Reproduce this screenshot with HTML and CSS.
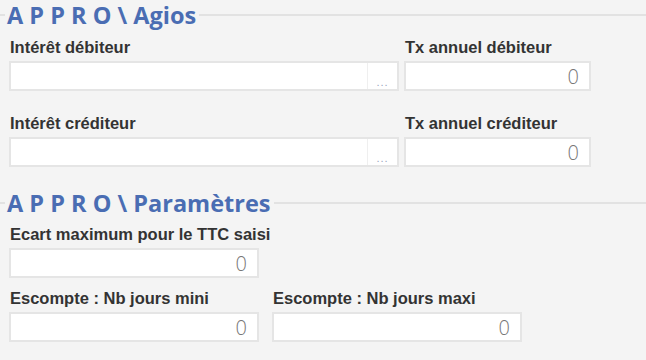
FILE: index.html
```html
<!DOCTYPE html>
<html lang="fr">
<head>
    <meta charset="UTF-8">
    <meta name="viewport" content="width=device-width, initial-scale=1.0">
    <title>APPRO - Paramètres</title>
    <link rel="stylesheet" href="styles.css">
</head>
<body>

<!-- Agios -->
<div class="group">
    <div class="group-title">A P P R O \ Agios</div>

    <div class="row">
        <div class="field field-wide">
            <label>Intérêt débiteur</label>
            <div class="box">
                <span class="box-text"></span>
                <span class="picker">...</span>
            </div>
        </div>
        <div class="field field-rate">
            <label>Tx annuel débiteur</label>
            <div class="box num">0</div>
        </div>
    </div>

    <div class="row">
        <div class="field field-wide">
            <label>Intérêt créditeur</label>
            <div class="box">
                <span class="box-text"></span>
                <span class="picker">...</span>
            </div>
        </div>
        <div class="field field-rate">
            <label>Tx annuel créditeur</label>
            <div class="box num">0</div>
        </div>
    </div>
</div>

<!-- Paramètres -->
<div class="group group-params">
    <div class="group-title">A P P R O \ Paramètres</div>

    <div class="row">
        <div class="field field-half">
            <label>Ecart maximum pour le TTC saisi</label>
            <div class="box num">0</div>
        </div>
    </div>

    <div class="row row-params">
        <div class="field field-half">
            <label>Escompte : Nb jours mini</label>
            <div class="box num">0</div>
        </div>
        <div class="field field-half">
            <label>Escompte : Nb jours maxi</label>
            <div class="box num">0</div>
        </div>
    </div>
</div>

</body>
</html>
```

FILE: styles.css
```css
body { margin: 0; background: #f4f4f4; font-family: "Liberation Sans", Arial, sans-serif; color: #333; }

.group { padding-top: 1px; }
.group-params { margin-top: 21px; }

.group-title { display: flex; align-items: center; height: 28px; font-family: "Open Sans", sans-serif; font-weight: 700; font-size: 23.5px; color: #4a6db3; line-height: 28px; }
.group-title::before { content: ""; width: 5px; border-top: 2px solid #e2e2e2; margin-right: 2px; }
.group-title::after { content: ""; flex: 1; border-top: 2px solid #e2e2e2; margin-left: 3px; }

.row { display: flex; gap: 5px; padding-left: 9px; margin-top: 6px; }
.row + .row { margin-top: 20px; }
.group-params .row { margin-top: 5px; }
.group-params .row + .row { margin-top: 8px; }
.row-params { gap: 13px; }

.field label { display: block; font-weight: 700; font-size: 16.5px; line-height: 20px; padding: 2px 0 0 1px; margin-bottom: 4px; white-space: nowrap; }
.field-wide { width: 390px; }
.field-rate { width: 187px; }
.field-half { width: 250px; }

.box { display: flex; height: 26px; border: 2px solid #e5e5e5; background: #fff; }
.box-text { flex: 1; }
.box.num { justify-content: flex-end; align-items: center; padding-right: 10px; font-family: "Open Sans", sans-serif; font-weight: 300; font-size: 20px; color: #777; }
.picker { width: 30px; border-left: 1px solid #efefef; color: #9aa6bd; font-size: 11px; line-height: 11px; letter-spacing: 1px; align-self: stretch; display: flex; align-items: flex-end; justify-content: center; padding-bottom: 1px; box-sizing: border-box; }
```
